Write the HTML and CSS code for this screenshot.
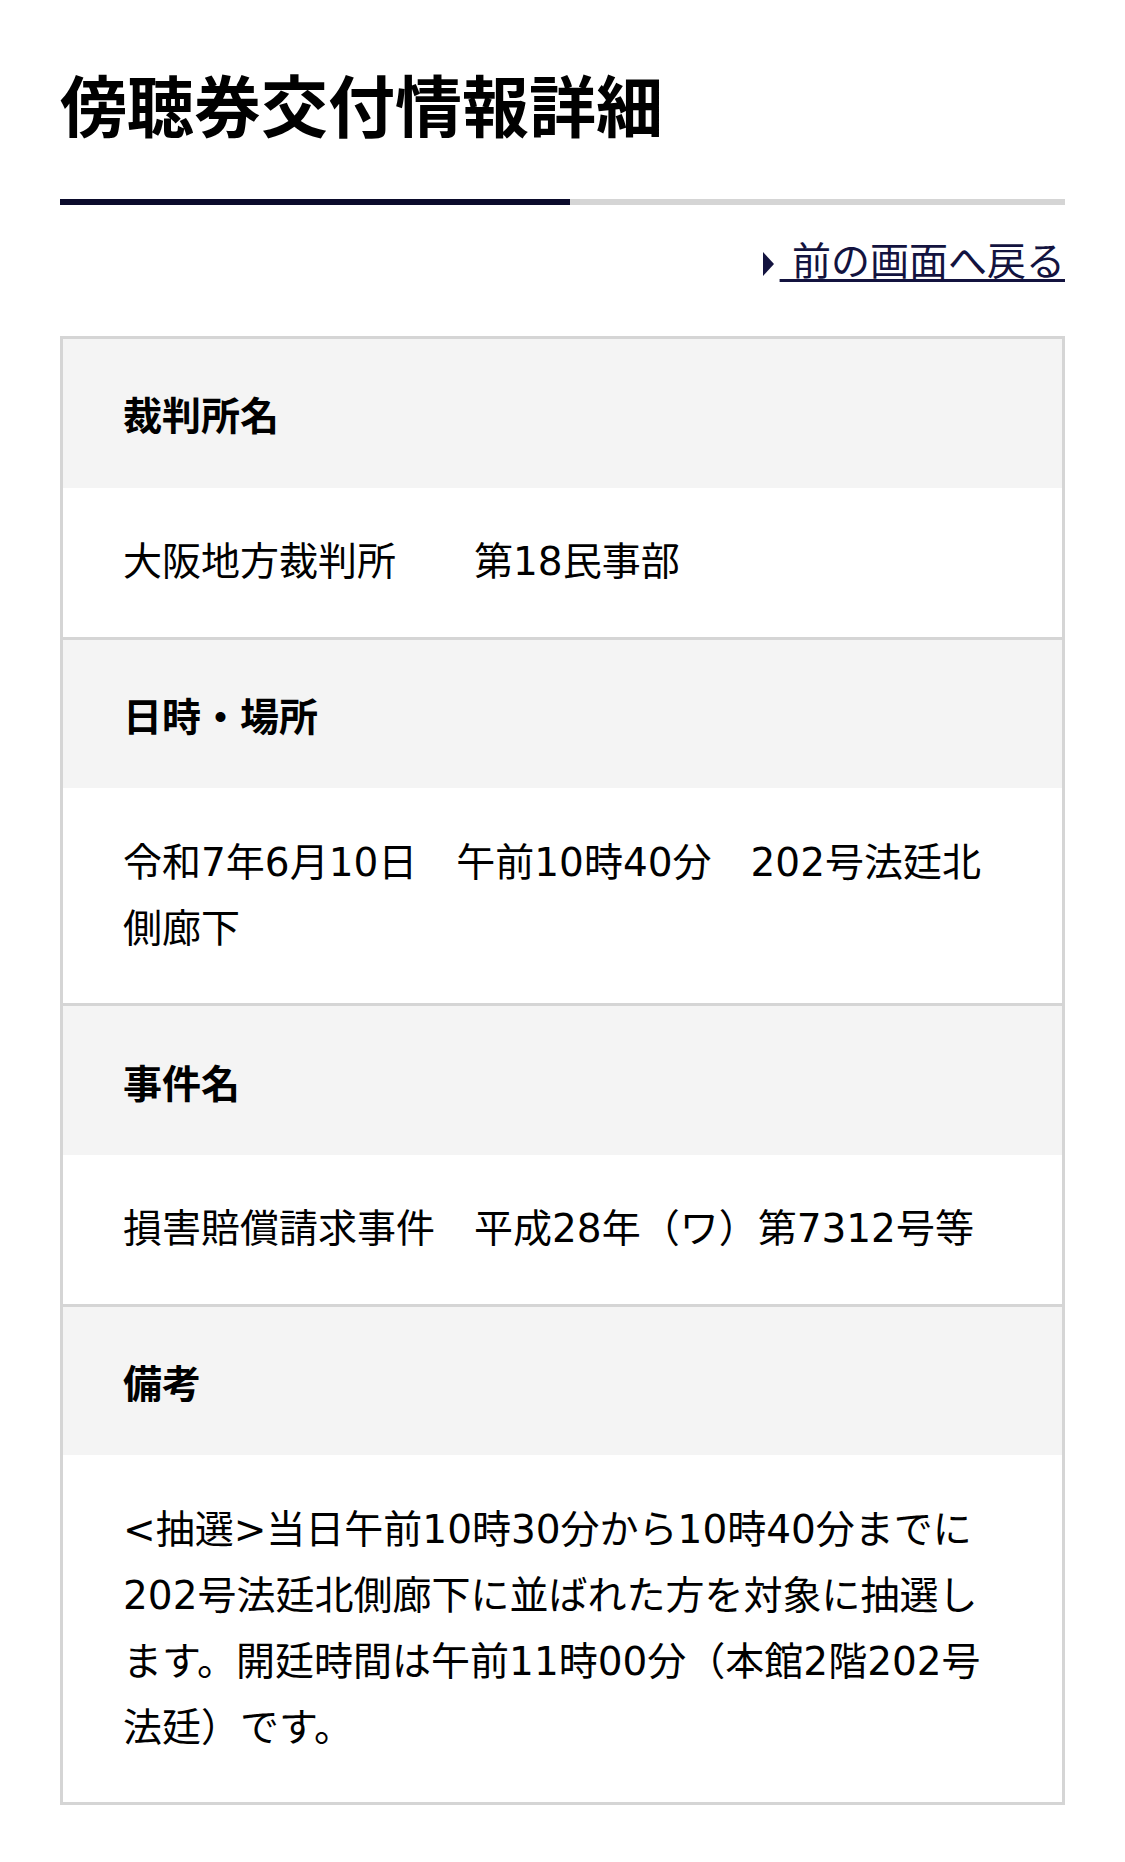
FILE: index.html
```html
<!DOCTYPE html>
<html lang="ja">
<head>
<meta charset="utf-8">
<title>傍聴券交付情報詳細</title>
<link rel="stylesheet" href="styles.css">
</head>
<body>
<main class="page">
  <h1 class="title">傍聴券交付情報詳細</h1>
  <div class="title-bar"><span class="title-bar-fill"></span></div>
  <p class="back"><a class="back-link" href="#"><span class="back-arrow"></span> 前の画面へ戻る</a></p>
  <dl class="detail">
    <div class="item">
      <dt class="label">裁判所名</dt>
      <dd class="value">大阪地方裁判所　　第18民事部</dd>
    </div>
    <div class="item">
      <dt class="label">日時・場所</dt>
      <dd class="value">令和7年6月10日　午前10時40分　202号法廷北側廊下</dd>
    </div>
    <div class="item">
      <dt class="label">事件名</dt>
      <dd class="value">損害賠償請求事件　平成28年（ワ）第7312号等</dd>
    </div>
    <div class="item">
      <dt class="label">備考</dt>
      <dd class="value">&lt;抽選&gt;当日午前10時30分から10時40分までに202号法廷北側廊下に並ばれた方を対象に抽選します。開廷時間は午前11時00分（本館2階202号法廷）です。</dd>
    </div>
  </dl>
</main>
</body>
</html>
```

FILE: styles.css
```css
html, body {
  margin: 0;
  padding: 0;
  background: #ffffff;
}

body {
  font-family: "Noto Sans CJK JP", "Noto Sans", sans-serif;
  color: #000000;
}

.page {
  padding: 0 60px;
}

.title {
  margin: 50px 0 0;
  font-size: 67px;
  line-height: 105px;
  font-weight: 700;
  letter-spacing: 0;
}

.title-bar {
  margin-top: 44px;
  height: 6px;
  background: #d5d5d5;
}

.title-bar-fill {
  display: block;
  width: 510px;
  height: 6px;
  background: #0b0b2c;
}

.back {
  margin: 21px 0 0;
  padding-top: 3px;
  height: 63px;
  text-align: right;
  font-family: "DejaVu Sans", "Noto Sans CJK JP", sans-serif;
  font-size: 39px;
  line-height: 66px;
}

.back-link {
  color: #13133f;
  text-decoration: underline;
  text-decoration-thickness: 3px;
  text-underline-offset: 4px;
}

.back-arrow {
  display: inline-block;
  width: 0;
  height: 0;
  border-top: 12px solid transparent;
  border-bottom: 12px solid transparent;
  border-left: 11px solid #13133f;
  margin-right: 6px;
  vertical-align: -1px;
}

.detail {
  margin: 44px 0 60px;
  border: 3px solid #d5d5d5;
}

.item + .item {
  border-top: 3px solid #d5d5d5;
}

.label,
.value {
  margin: 0;
  padding: 41.4px 60px;
  font-size: 39px;
  line-height: 66px;
}

.label {
  background: #f4f4f4;
  font-weight: 700;
}

.value {
  background: #ffffff;
  font-weight: 400;
  font-family: "DejaVu Sans", "Noto Sans CJK JP", sans-serif;
}
```
